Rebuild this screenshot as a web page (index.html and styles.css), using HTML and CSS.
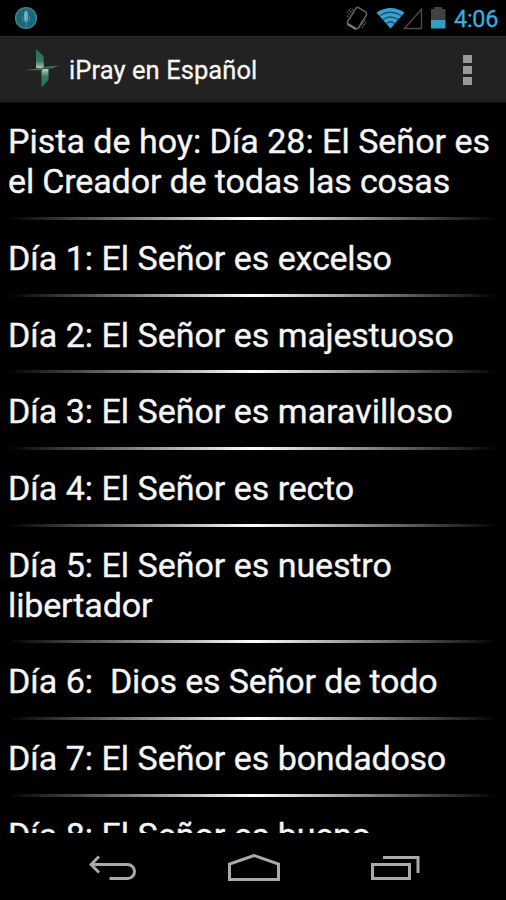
FILE: index.html
```html
<!DOCTYPE html>
<html lang="es">
<head>
<meta charset="utf-8">
<title>iPray en Español</title>
<link rel="stylesheet" href="styles.css">
</head>
<body>
<div class="status">
  <svg class="mic" width="24" height="24" viewBox="0 0 24 24"><circle cx="12" cy="12" r="10.4" fill="#17697f" stroke="#4b7e88" stroke-width="1.4"/><path d="M12 4l2 3v6.500l-2 3-2-3V7z" fill="#74aab3"/><path d="M8.500 10v4l3.500 3.500 3.500-3.500v-4M12 17v4" fill="none" stroke="#428895"/></svg>
  <svg class="indicators" width="104" height="26" viewBox="0 0 104 26" fill="none">
    <path d="M12 3l2-.700 8 5 .7 2-8.700 14-2 .700-8-5-.700-2z" stroke="#626262" stroke-width="1.500"/>
    <path d="M3.500 19l8.500 5" stroke="#7c7c7c" stroke-width="2.200"/>
    <path d="M3 8l4-5M3 12l6-8M4 15l6-8M15 23l6-8M18 23l4-6M17 18l4-5" stroke="#606060" stroke-width="1.200" stroke-dasharray="1.800 1"/>
    <path d="M32.500 7.500Q46.500-1.500 60.500 7.500L46.500 23.500z" fill="#38a3cf"/>
    <path d="M36 10.500Q46.500 4 57 10.500M39 14.500Q46.500 9.500 54 14.500M42.500 18.500Q46.500 15 50.500 18.500" stroke="#14526b" stroke-width="1.300"/>
    <path d="M60.500 23.500L77.500 4v19.500z" stroke="#4c4c4c" stroke-width="1.400"/>
    <path d="M87 4h3V2h8v2h3.500v10H87z" fill="#414141"/><path d="M87 14.500h14.500v9H87z" fill="#379bc2"/>
  </svg>
  <span class="clock">4:06</span>
</div>
<header class="bar">
  <svg class="logo" width="36" height="40" viewBox="0 0 36 40">
    <defs><linearGradient id="up" x1="0" y1="0" x2="0" y2="1"><stop offset="0" stop-color="#167550"/><stop offset=".6" stop-color="#3b765c"/><stop offset="1" stop-color="#c3cec6"/></linearGradient><linearGradient id="down" x1="0" y1="0" x2="0" y2="1"><stop offset="0" stop-color="#c3cec6"/><stop offset=".4" stop-color="#39785c"/><stop offset="1" stop-color="#157c54"/></linearGradient></defs>
    <path d="M12 1l7.500 7 .5 13-8-1z" fill="url(#up)"/>
    <path d="M17.500 21h7v11l-7 7.500z" fill="url(#down)"/>
    <path d="M0 22.300l15-2h5l-1.500 2zM17.500 20.500l1-1.500 17-1.500-8 3z" fill="#3b765f"/>
  </svg>
  <h1 class="title">iPray en Español</h1>
  <div class="more"><i></i><i></i><i></i></div>
</header>
<main class="list">
  <div class="row two"><span>Pista de hoy: Día 28: El Señor es</span><br><span class="tight">el Creador de todas las cosas</span></div>
  <div class="row">Día 1: El Señor es <span class="tighter">excelso</span></div>
  <div class="row">Día 2: El Señor es <span class="tighter">majestuoso</span></div>
  <div class="row">Día 3: El Señor es maravilloso</div>
  <div class="row">Día 4: El Señor es <span class="tighter">recto</span></div>
  <div class="row two">Día 5: El Señor es <span class="tight">nuestro</span><br><span class="tight">libertador</span></div>
  <div class="row">Día 6:&nbsp; <span class="tight">Dios es Señor de todo</span></div>
  <div class="row">Día 7: El Señor es <span class="tighter">bondadoso</span></div>
  <div class="row">Día 8: El Señor es <span class="tighter">bueno</span></div>
</main>
<nav class="nav">
  <svg width="48" height="30" viewBox="0 0 48 30"><path d="M10 2.500L2 10.500l8 8M2 10.500h36.500a7 7 0 0 1 0 14H20.500"/></svg>
  <svg width="52" height="30" viewBox="0 0 52 30"><path d="M1.500 25.500V10L26 1.500 50.500 10v15.500z"/></svg>
  <svg width="50" height="30" viewBox="0 0 50 30"><path d="M1.500 10.500h37v14h-37zM12 3.500h35V19"/></svg>
</nav>
</body>
</html>
```

FILE: styles.css
```css
* { box-sizing: border-box; }
body { margin: 0; width: 506px; height: 900px; overflow: hidden; display: flex; flex-direction: column; background: #000; color: #f6f6f6; font-family: Roboto, "Liberation Sans", sans-serif; }
.status { height: 36px; flex: none; display: flex; align-items: center; padding: 0 8px 0 14px; }
.indicators { margin-left: auto; }
.clock { width: 44px; margin-left: 6px; color: #38aee0; font-size: 23.5px; line-height: 36px; padding-top: 1px; letter-spacing: -0.3px; white-space: nowrap; -webkit-text-stroke: 0.3px; }
.bar { height: 67px; flex: none; display: flex; align-items: center; padding: 0 34px 0 24px; background: #222; border-top: 1px solid #2b2b2b; border-bottom: 2px solid #171717; }
.logo { flex: none; margin-top: -2px; }
.title { margin: 2px 0 0 9px; font-size: 25.5px; font-weight: 400; line-height: 34px; letter-spacing: 0.08px; white-space: nowrap; -webkit-text-stroke: 0.3px; }
.more { margin-left: auto; margin-top: 2px; width: 9px; display: grid; gap: 3px; }
.more i { height: 8px; background: #999; }
.list { flex: none; height: 730px; padding-top: 0.6px; overflow: hidden; }
.row { height: 76.670px; padding: 17.700px 8px 0; font-size: 34px; line-height: 40px; white-space: nowrap; -webkit-text-stroke: 0.35px; background: linear-gradient(90deg, transparent 8px, #fff 50%, transparent calc(100% - 8px)) bottom / 100% 3.300px no-repeat; }
.two { height: 116.670px; }
.tight { letter-spacing: -0.14px; }
.tighter { letter-spacing: -0.25px; }
.nav { flex: none; height: 67px; display: flex; justify-content: space-between; align-items: center; padding: 4px 85px 0 89px; }
.nav path { fill: none; stroke: #aaa; stroke-width: 3; }
```
